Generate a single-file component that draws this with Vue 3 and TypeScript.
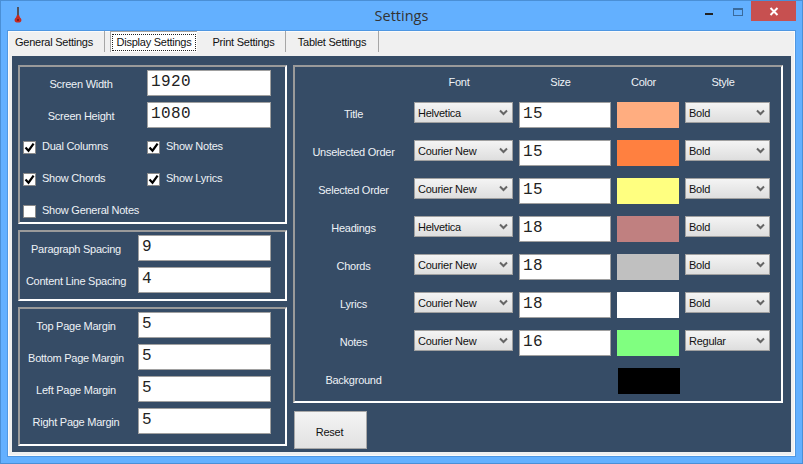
<template>
  <div class="window">
    <header class="titlebar">
      <div class="title-left">
        <svg class="app-icon" width="16" height="18" viewBox="0 0 16 18" aria-label="Settings icon">
          <path d="M8 1v9" stroke="#4a3a36" stroke-width="1.6" fill="none" />
          <path d="M7 9h2l1 2.4c1.6.8 2 3.6.6 4.6-1.4.8-3.8.8-5.2 0-1.4-1-1-3.8.6-4.6z" fill="#c62a22" />
          <circle cx="8" cy="14" r="1" fill="#6e1512" />
        </svg>
      </div>
      <div class="title">Settings</div>
      <div class="controls">
        <span class="ctl ctl-min"><i></i></span>
        <span class="ctl ctl-max"><i></i></span>
        <span class="ctl ctl-close">
          <svg width="10" height="9" viewBox="0 0 10 9">
            <path d="M1.5 1l7 7M8.5 1l-7 7" stroke="#fff" stroke-width="2" fill="none" />
          </svg>
        </span>
      </div>
    </header>

    <div class="client">
      <nav class="tabs">
        <div
          v-for="tab in tabs"
          :key="tab.label"
          class="tab"
          :class="[tab.cls, { active: tab.active }]"
        >
          <span class="tab-text">{{ tab.label }}</span>
        </div>
      </nav>

      <main class="panel">
        <section class="left-col">
          <div class="group group-screen">
            <div class="field-grid screen-grid">
              <template v-for="f in screenFields" :key="f.label">
                <label class="lbl">{{ f.label }}</label>
                <input class="num" :value="f.value" readonly />
              </template>
            </div>
            <div class="checks">
              <div v-for="c in checks" :key="c.label" class="check" :class="{ wide: c.wide }">
                <span class="box">
                  <svg v-if="c.on" width="11" height="11" viewBox="0 0 11 11">
                    <path d="M1.5 5.5l3 3.2L9.6 1.6" stroke="#000" stroke-width="2.2" fill="none" />
                  </svg>
                </span>
                <span class="lbl">{{ c.label }}</span>
              </div>
            </div>
          </div>

          <div class="group group-spacing">
            <div class="field-grid">
              <template v-for="f in spacingFields" :key="f.label">
                <label class="lbl">{{ f.label }}</label>
                <input class="num" :value="f.value" readonly />
              </template>
            </div>
          </div>

          <div class="group group-margin">
            <div class="field-grid">
              <template v-for="f in marginFields" :key="f.label">
                <label class="lbl">{{ f.label }}</label>
                <input class="num" :value="f.value" readonly />
              </template>
            </div>
          </div>
        </section>

        <section class="right-col">
          <div class="group group-fonts">
            <div class="font-grid">
              <span></span>
              <span class="lbl head">Font</span>
              <span class="lbl head">Size</span>
              <span class="lbl head">Color</span>
              <span class="lbl head">Style</span>

              <template v-for="row in fontRows" :key="row.name">
                <span class="lbl row-name">{{ row.name }}</span>
                <div class="combo">
                  <span>{{ row.font }}</span>
                  <svg width="9" height="7" viewBox="0 0 9 7"><path d="M1 1.5l3.5 3.5L8 1.5" stroke="#666" stroke-width="2" fill="none" /></svg>
                </div>
                <input class="num" :value="row.size" readonly />
                <div class="swatch" :style="{ background: row.color }"></div>
                <div class="combo combo-style">
                  <span>{{ row.style }}</span>
                  <svg width="9" height="7" viewBox="0 0 9 7"><path d="M1 1.5l3.5 3.5L8 1.5" stroke="#666" stroke-width="2" fill="none" /></svg>
                </div>
              </template>

              <span class="lbl row-name">Background</span>
              <div class="swatch swatch-bg"></div>
            </div>
          </div>
          <button class="reset">Reset</button>
        </section>
      </main>
    </div>
  </div>
</template>

<script setup lang="ts">
const tabs = [
  { label: 'General Settings', cls: 'tab-general', active: false },
  { label: 'Display Settings', cls: 'tab-display', active: true },
  { label: 'Print Settings', cls: 'tab-print', active: false },
  { label: 'Tablet Settings', cls: 'tab-tablet', active: false },
];

const screenFields = [
  { label: 'Screen Width', value: '1920' },
  { label: 'Screen Height', value: '1080' },
];

const checks = [
  { label: 'Dual Columns', on: true, wide: false },
  { label: 'Show Notes', on: true, wide: false },
  { label: 'Show Chords', on: true, wide: false },
  { label: 'Show Lyrics', on: true, wide: false },
  { label: 'Show General Notes', on: false, wide: true },
];

const spacingFields = [
  { label: 'Paragraph Spacing', value: '9' },
  { label: 'Content Line Spacing', value: '4' },
];

const marginFields = [
  { label: 'Top Page Margin', value: '5' },
  { label: 'Bottom Page Margin', value: '5' },
  { label: 'Left Page Margin', value: '5' },
  { label: 'Right Page Margin', value: '5' },
];

const fontRows = [
  { name: 'Title', font: 'Helvetica', size: '15', color: '#ffad80', style: 'Bold' },
  { name: 'Unselected Order', font: 'Courier New', size: '15', color: '#ff8040', style: 'Bold' },
  { name: 'Selected Order', font: 'Courier New', size: '15', color: '#ffff80', style: 'Bold' },
  { name: 'Headings', font: 'Helvetica', size: '18', color: '#c08080', style: 'Bold' },
  { name: 'Chords', font: 'Courier New', size: '18', color: '#c0c0c0', style: 'Bold' },
  { name: 'Lyrics', font: 'Courier New', size: '18', color: '#ffffff', style: 'Bold' },
  { name: 'Notes', font: 'Courier New', size: '16', color: '#80ff80', style: 'Regular' },
];
</script>

<style>
html,
body {
  margin: 0;
  background: #63b0ff;
}
</style>

<style scoped>
.window {
  box-sizing: border-box;
  width: 803px;
  height: 464px;
  background: #63b0ff;
  border: 1px solid #4a8fd6;
  display: flex;
  flex-direction: column;
  font-family: "Liberation Sans", Arial, sans-serif;
  font-size: 11px;
  letter-spacing: -0.25px;
  overflow: hidden;
}

.titlebar {
  height: 30px;
  flex: none;
  display: grid;
  grid-template-columns: 1fr auto 1fr;
}

.title-left {
  padding: 5px 0 0 9px;
}

.app-icon {
  display: block;
}

.title {
  font-family: "Open Sans", "Noto Sans", sans-serif;
  font-size: 14.5px;
  letter-spacing: 0;
  color: #333;
  line-height: 30px;
}

.controls {
  display: flex;
  justify-content: flex-end;
  align-items: flex-start;
  padding-right: 6px;
}

.ctl {
  display: flex;
  align-items: center;
  justify-content: center;
  height: 20px;
}

.ctl-min {
  width: 26px;
}

.ctl-min i {
  width: 8px;
  height: 2px;
  background: #222;
  margin-top: 6px;
}

.ctl-max {
  width: 26px;
  margin-right: 3px;
}

.ctl-max i {
  box-sizing: border-box;
  width: 10px;
  height: 8px;
  border: 1px solid #3a6a9c;
  border-top-width: 2px;
  margin-top: 2px;
  margin-left: 6px;
}

.ctl-close {
  width: 45px;
  background: #c75050;
}

.client {
  flex: 1;
  margin: 0 7px 7px;
  background: #f0f0f0;
  box-shadow: inset 0 0 0 1px #fbfbfb, 0 0 0 1px #4f97e2;
  display: flex;
  flex-direction: column;
}

.tabs {
  height: 25px;
  flex: none;
  display: flex;
  align-items: flex-start;
}

.tab {
  box-sizing: border-box;
  height: 21px;
  display: flex;
  align-items: center;
  justify-content: center;
  border-right: 1px solid #a6a6a6;
  color: #111;
}

.tab-general {
  width: 97px;
  padding-right: 4px;
}

.tab-display {
  width: 87px;
  margin-left: 5px;
  background: #fff;
  border-right: none;
  border-left: 1px solid #a6a6a6;
  border-top: 1px solid #a6a6a6;
  padding: 1px;
}

.tab-print {
  width: 84px;
  margin-left: 5px;
}

.tab-tablet {
  width: 93px;
}

.tab-text {
  white-space: nowrap;
}

.tab-display .tab-text {
  flex: 1;
  align-self: stretch;
  text-align: center;
  line-height: 17px;
  margin-top: 1px;
  outline: 1px dotted #222;
  outline-offset: -1px;
}

.panel {
  flex: 1;
  margin: 0 4px 4px;
  background: #364c66;
  padding: 9px 6px 0;
  display: flex;
  gap: 6px;
}

.left-col {
  width: 269px;
  flex: none;
  display: flex;
  flex-direction: column;
  gap: 6px;
}

.right-col {
  width: 490px;
  flex: none;
}

.group {
  box-sizing: border-box;
  border: 2px solid #fff;
  border-top-color: #9a9a9a;
  border-left-color: #9a9a9a;
}

.group-screen {
  height: 159px;
  padding-top: 3px;
}

.group-spacing {
  height: 71px;
  padding-top: 3px;
}

.group-margin {
  height: 139px;
  padding-top: 3px;
}

.group-fonts {
  height: 338px;
  padding-top: 7px;
}

.field-grid {
  display: grid;
  grid-template-columns: 112px 133px;
  column-gap: 6px;
  row-gap: 6px;
  align-items: center;
}

.screen-grid {
  grid-template-columns: 122px 124px;
  column-gap: 5px;
}

.lbl {
  color: #eef2f6;
  text-align: center;
  white-space: nowrap;
}

.field-grid .lbl {
  padding-top: 2px;
}

.num {
  box-sizing: border-box;
  width: 100%;
  height: 26px;
  border: 1px solid #a0a0a0;
  background: #fff;
  padding: 0 0 2px 3px;
  margin: 0;
  outline: none;
  border-radius: 0;
  font-family: "Liberation Mono", "Courier New", monospace;
  font-size: 16px;
  letter-spacing: 0.4px;
  color: #222;
}

.checks {
  display: grid;
  grid-template-columns: 124px 1fr;
  row-gap: 19px;
  padding: 13px 0 0 3px;
}

.check {
  display: flex;
  align-items: center;
  height: 13px;
  gap: 6px;
}

.check .lbl {
  padding-bottom: 3px;
}

.check.wide {
  grid-column: 1 / span 2;
}

.box {
  box-sizing: border-box;
  width: 13px;
  height: 13px;
  flex: none;
  background: #fff;
  border: 1px solid #8a8a8a;
  display: flex;
  align-items: center;
  justify-content: center;
}

.font-grid {
  display: grid;
  grid-template-columns: 113px 99px 92px 62px 85px;
  grid-template-rows: 16px repeat(8, 26px);
  column-gap: 6px;
  row-gap: 12px;
  align-items: center;
}

.head {
  line-height: 16px;
  padding-right: 9px;
}

.row-name {
  padding: 0 0 2px 4px;
}

.combo {
  box-sizing: border-box;
  height: 21px;
  align-self: start;
  border: 1px solid #a0a0a0;
  background: linear-gradient(#f4f4f4, #dedede);
  color: #111;
  display: flex;
  align-items: center;
  justify-content: space-between;
  padding: 0 4px 0 3px;
}

.swatch {
  height: 26px;
}

.swatch-bg {
  grid-column: 4;
  margin: 0 -1px 0 1px;
  background: #000;
}

.reset {
  display: block;
  box-sizing: border-box;
  width: 73px;
  height: 38px;
  margin: 8px 0 0 1px;
  border: 1px solid #a8a8a8;
  border-radius: 0;
  background: linear-gradient(#f4f4f4, #e2e2e2);
  font-family: "Liberation Sans", Arial, sans-serif;
  font-size: 11px;
  letter-spacing: -0.25px;
  color: #111;
  padding: 3px 2px 0 0;
}
</style>
